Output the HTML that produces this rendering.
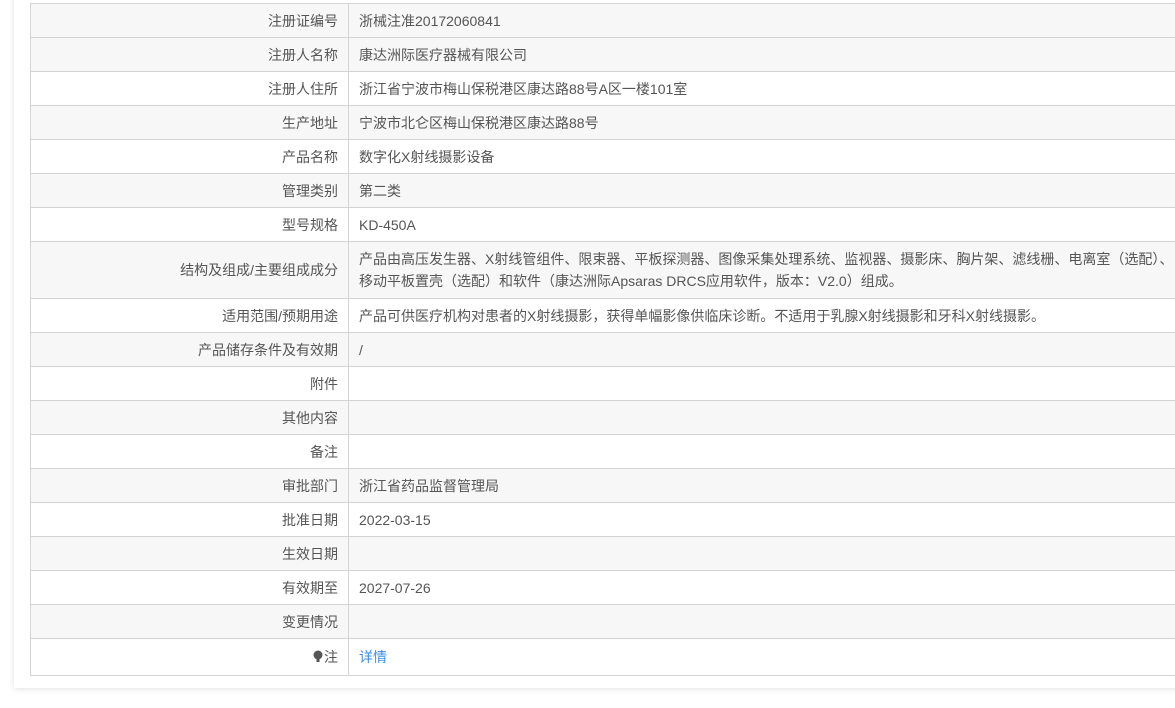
<!DOCTYPE html>
<html><head><meta charset="utf-8"><style>
body{margin:0;width:1175px;height:708px;background:#fff;overflow:hidden;font-family:"Liberation Sans","Noto Sans CJK SC",sans-serif;}
.panel{position:absolute;left:14px;top:-10px;width:1200px;height:698px;background:#fff;box-shadow:0 1px 6px rgba(0,0,0,0.12);}
table{position:absolute;left:30px;top:3px;border-collapse:collapse;width:1160px;font-size:14px;color:#555;}
td{border:1px solid #d4d4d4;height:33px;padding:0 10px;line-height:22px;}
td.l{width:297px;text-align:right;}
tr.g td{background:#f7f7f7;}
a{color:#3a8ee6;text-decoration:none;}
</style></head><body>
<div class="panel"></div>
<table>
<tr class="g"><td class="l">注册证编号</td><td>浙械注准20172060841</td></tr>
<tr class="g"><td class="l">注册人名称</td><td>康达洲际医疗器械有限公司</td></tr>
<tr><td class="l">注册人住所</td><td>浙江省宁波市梅山保税港区康达路88号A区一楼101室</td></tr>
<tr class="g"><td class="l">生产地址</td><td>宁波市北仑区梅山保税港区康达路88号</td></tr>
<tr><td class="l">产品名称</td><td>数字化X射线摄影设备</td></tr>
<tr class="g"><td class="l">管理类别</td><td>第二类</td></tr>
<tr><td class="l">型号规格</td><td>KD-450A</td></tr>
<tr class="g"><td class="l" style="height:56px">结构及组成/主要组成成分</td><td style="white-space:nowrap">产品由高压发生器、X射线管组件、限束器、平板探测器、图像采集处理系统、监视器、摄影床、胸片架、滤线栅、电离室（选配）、<br>移动平板置壳（选配）和软件（康达洲际Apsaras DRCS应用软件，版本：V2.0）组成。</td></tr>
<tr><td class="l">适用范围/预期用途</td><td>产品可供医疗机构对患者的X射线摄影，获得单幅影像供临床诊断。不适用于乳腺X射线摄影和牙科X射线摄影。</td></tr>
<tr class="g"><td class="l">产品储存条件及有效期</td><td>/</td></tr>
<tr><td class="l">附件</td><td></td></tr>
<tr class="g"><td class="l">其他内容</td><td></td></tr>
<tr><td class="l">备注</td><td></td></tr>
<tr class="g"><td class="l">审批部门</td><td>浙江省药品监督管理局</td></tr>
<tr><td class="l">批准日期</td><td>2022-03-15</td></tr>
<tr class="g"><td class="l">生效日期</td><td></td></tr>
<tr><td class="l">有效期至</td><td>2027-07-26</td></tr>
<tr class="g"><td class="l">变更情况</td><td></td></tr>
<tr><td class="l" style="height:36px"><svg width="10" height="13" viewBox="0 0 10 13" style="vertical-align:-1px;margin-right:1px"><circle cx="5" cy="5" r="4.5" fill="#555"/><rect x="3.5" y="9" width="3" height="3" fill="#555"/></svg>注</td><td><a>详情</a></td></tr>
</table>
</body></html>
